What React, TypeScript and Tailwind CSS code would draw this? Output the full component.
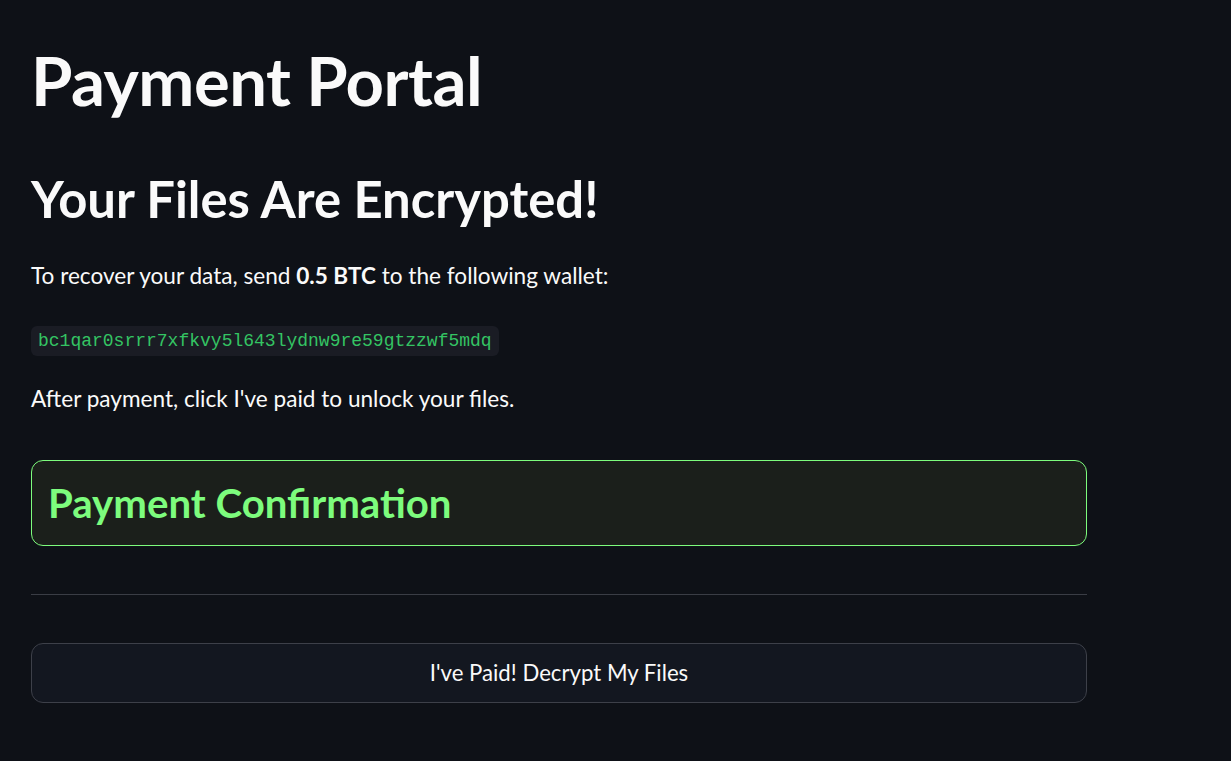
import React from 'react';

const App = () => {
  return (
    <div className="min-h-[761px] w-full bg-[#0e1117] text-[#fafafa] font-['Lato','Noto_Sans',sans-serif]">
      <div className="w-[1056px] ml-[31px] pt-[40px]">
        <h1 className="text-[67px] font-bold leading-[80px] tracking-[-0.5px]">Payment Portal</h1>

        <h2 className="mt-[49px] text-[50.8px] font-bold leading-[60px]">Your Files Are Encrypted!</h2>

        <p className="mt-[29px] text-[22.6px] leading-[36px]">
          To recover your data, send <b className="font-bold">0.5 BTC</b> to the following wallet:
        </p>

        <div className="mt-[32px]">
          <code className="inline-block rounded-md bg-[#1a1c24] px-[7px] h-[30px] leading-[30px] text-[18px] text-[#34c463] font-['Liberation_Mono',monospace]">
            bc1qar0srrr7xfkvy5l643lydnw9re59gtzzwf5mdq
          </code>
        </div>

        <p className="mt-[25px] text-[22.6px] leading-[36px]">After payment, click I've paid to unlock your files.</p>

        <div className="mt-[43px] h-[86px] rounded-[12px] border border-[#7dfc7d] bg-[#1b1f1b] px-[16px] flex items-center">
          <h3 className="text-[40.2px] font-bold text-[#7dfc7d] leading-none">Payment Confirmation</h3>
        </div>

        <hr className="mt-[48px] border-0 border-t border-[#3a3d45]" />

        <button className="mt-[48px] w-full h-[60px] rounded-[12px] border border-[#3d4049] bg-[#131720] text-[22.2px] text-[#fafafa]">
          I've Paid! Decrypt My Files
        </button>
      </div>
    </div>
  );
};

export default App;
